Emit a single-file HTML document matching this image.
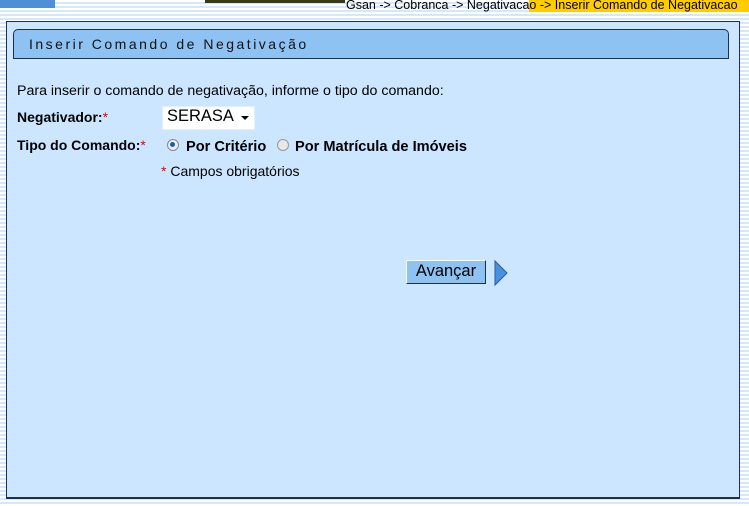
<!DOCTYPE html>
<html><head><meta charset="utf-8"><style>
body{margin:0;width:749px;height:506px;overflow:hidden;position:relative;font-family:"Liberation Sans",Arial,sans-serif;
background:repeating-linear-gradient(to bottom,#ffffff 0 2px,#d4e8fa 2px 4px);}
.abs{position:absolute;white-space:nowrap}
</style></head><body>
<div class="abs" style="left:0;top:0;width:55px;height:8px;background:#4f8fd8"></div>
<div class="abs" style="left:205px;top:0;width:140px;height:3px;background:#3a3a10"></div>
<div class="abs" style="left:529px;top:0;width:220px;height:12px;background:#ffcc00"></div>
<div class="abs" style="left:346px;top:-2px;font-size:12.5px;color:#000;line-height:14px">Gsan -&gt; Cobranca -&gt; Negativacao -&gt; Inserir Comando de Negativacao</div>
<div class="abs" style="left:6px;top:21px;width:732px;height:475px;background:#cce6ff;border:1px solid #1e2f4a;border-bottom-width:2px"></div>
<div class="abs" style="left:13px;top:29px;width:714px;height:28px;background:#8ec2f2;border:1px solid #1e2f4a;border-radius:5px 5px 0 0"></div>
<div class="abs" style="left:29px;top:36px;font-size:14px;letter-spacing:2.5px;color:#111">Inserir Comando de Negativação</div>
<div class="abs" style="left:17px;top:83px;font-size:14.2px;color:#000">Para inserir o comando de negativação, informe o tipo do comando:</div>
<div class="abs" style="left:17px;top:109px;font-size:14px;font-weight:bold">Negativador:<span style="color:#e00;font-weight:normal">*</span></div>
<div class="abs" style="left:162px;top:106px;width:91px;height:22px;background:#fff;border:1px solid #e6eef6"></div>
<div class="abs" style="left:167px;top:107px;font-size:16.5px">SERASA</div>
<div class="abs" style="left:241px;top:116px;width:0;height:0;border-left:4px solid transparent;border-right:4px solid transparent;border-top:4px solid #000"></div>
<div class="abs" style="left:17px;top:137px;font-size:14px;font-weight:bold">Tipo do Comando:<span style="color:#e00;font-weight:normal">*</span></div>
<div class="abs" style="left:167px;top:139px;width:10px;height:10px;border-radius:50%;background:#eee;border:1px solid #888"></div>
<div class="abs" style="left:170px;top:142px;width:5px;height:5px;border-radius:50%;background:#1b5fa5"></div>
<div class="abs" style="left:186px;top:139px;font-size:14.6px;font-weight:bold">Por Critério</div>
<div class="abs" style="left:277px;top:139px;width:10px;height:10px;border-radius:50%;background:#e8e8e8;border:1px solid #999"></div>
<div class="abs" style="left:295px;top:139px;font-size:14.6px;font-weight:bold">Por Matrícula de Imóveis</div>
<div class="abs" style="left:161px;top:163px;font-size:14px"><span style="color:#e00">*</span> Campos obrigatórios</div>
<div class="abs" style="left:406px;top:260px;width:78px;height:22px;background:#8ec2f2;border:1px solid #1e2f4a;border-top-color:#fff;border-left-color:#fff"></div>
<div class="abs" style="left:406px;top:262px;width:80px;text-align:center;font-size:16.5px">Avançar</div>
<svg class="abs" style="left:493px;top:259px" width="16" height="28"><polygon points="2,2 14,14 2,26" fill="#4a90e0" stroke="#2a5a9a" stroke-width="1"/></svg>
</body></html>
